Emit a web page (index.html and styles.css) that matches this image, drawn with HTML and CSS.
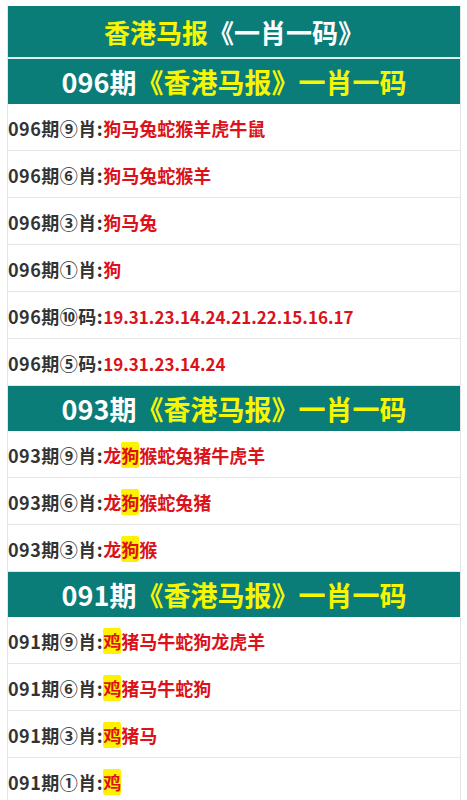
FILE: index.html
```html
<!DOCTYPE html>
<html lang="zh-CN">
<head>
  <meta charset="UTF-8" />
  <title>香港马报《一肖一码》</title>
  <link rel="stylesheet" href="styles.css">
</head>
<body>
  <div class="box">
    <h1 class="title"><span class="yel">香港马报</span>《一肖一码》</h1>

    <h2 class="head">096期<span class="yel">《香港马报》一肖一码</span></h2>
    <ul class="list">
      <li>096期⑨肖:<span class="red">狗马兔蛇猴羊虎牛鼠</span></li>
      <li>096期⑥肖:<span class="red">狗马兔蛇猴羊</span></li>
      <li>096期③肖:<span class="red">狗马兔</span></li>
      <li>096期①肖:<span class="red">狗</span></li>
      <li>096期⑩码:<span class="red num">19.31.23.14.24.21.22.15.16.17</span></li>
      <li>096期⑤码:<span class="red num">19.31.23.14.24</span></li>
    </ul>

    <h2 class="head">093期<span class="yel">《香港马报》一肖一码</span></h2>
    <ul class="list">
      <li>093期⑨肖:<span class="red">龙<mark>狗</mark>猴蛇兔猪牛虎羊</span></li>
      <li>093期⑥肖:<span class="red">龙<mark>狗</mark>猴蛇兔猪</span></li>
      <li>093期③肖:<span class="red">龙<mark>狗</mark>猴</span></li>
    </ul>

    <h2 class="head">091期<span class="yel">《香港马报》一肖一码</span></h2>
    <ul class="list">
      <li>091期⑨肖:<span class="red"><mark>鸡</mark>猪马牛蛇狗龙虎羊</span></li>
      <li>091期⑥肖:<span class="red"><mark>鸡</mark>猪马牛蛇狗</span></li>
      <li>091期③肖:<span class="red"><mark>鸡</mark>猪马</span></li>
      <li>091期①肖:<span class="red"><mark>鸡</mark></span></li>
    </ul>
  </div>
</body>
</html>
```

FILE: styles.css
```css
body {
  margin: 0;
  background: #fff;
  font-family: "Noto Sans CJK SC", "Noto Sans", sans-serif;
}
.box {
  margin: 6px 6px 0 7px;
  border-left: 1px solid #e4e4e4;
  border-right: 1px solid #e4e4e4;
}
.title {
  margin: 0;
  height: 51px;
  line-height: 51px;
  background: #0a7d78;
  color: #fff;
  font-size: 26px;
  font-weight: bold;
  text-align: center;
  border-bottom: 2px solid #e2eeed;
}
.head {
  margin: 0;
  height: 45px;
  line-height: 45px;
  background: #0a7d78;
  color: #fff;
  font-size: 27px;
  font-weight: bold;
  text-align: center;
}
.yel {
  color: #f6f600;
}
.list {
  list-style: none;
  margin: 0;
  padding: 0;
}
.list li {
  height: 46px;
  line-height: 48px;
  border-bottom: 1px solid #e6e6e6;
  font-size: 18px;
  font-weight: bold;
  color: #333;
  letter-spacing: 0.5px;
  white-space: nowrap;
}
.red {
  color: #dc121a;
  letter-spacing: 0;
}
.num {
  font-size: 17px;
}
mark {
  background: #fff200;
  color: #dc121a;
  border-radius: 2px;
}
```
